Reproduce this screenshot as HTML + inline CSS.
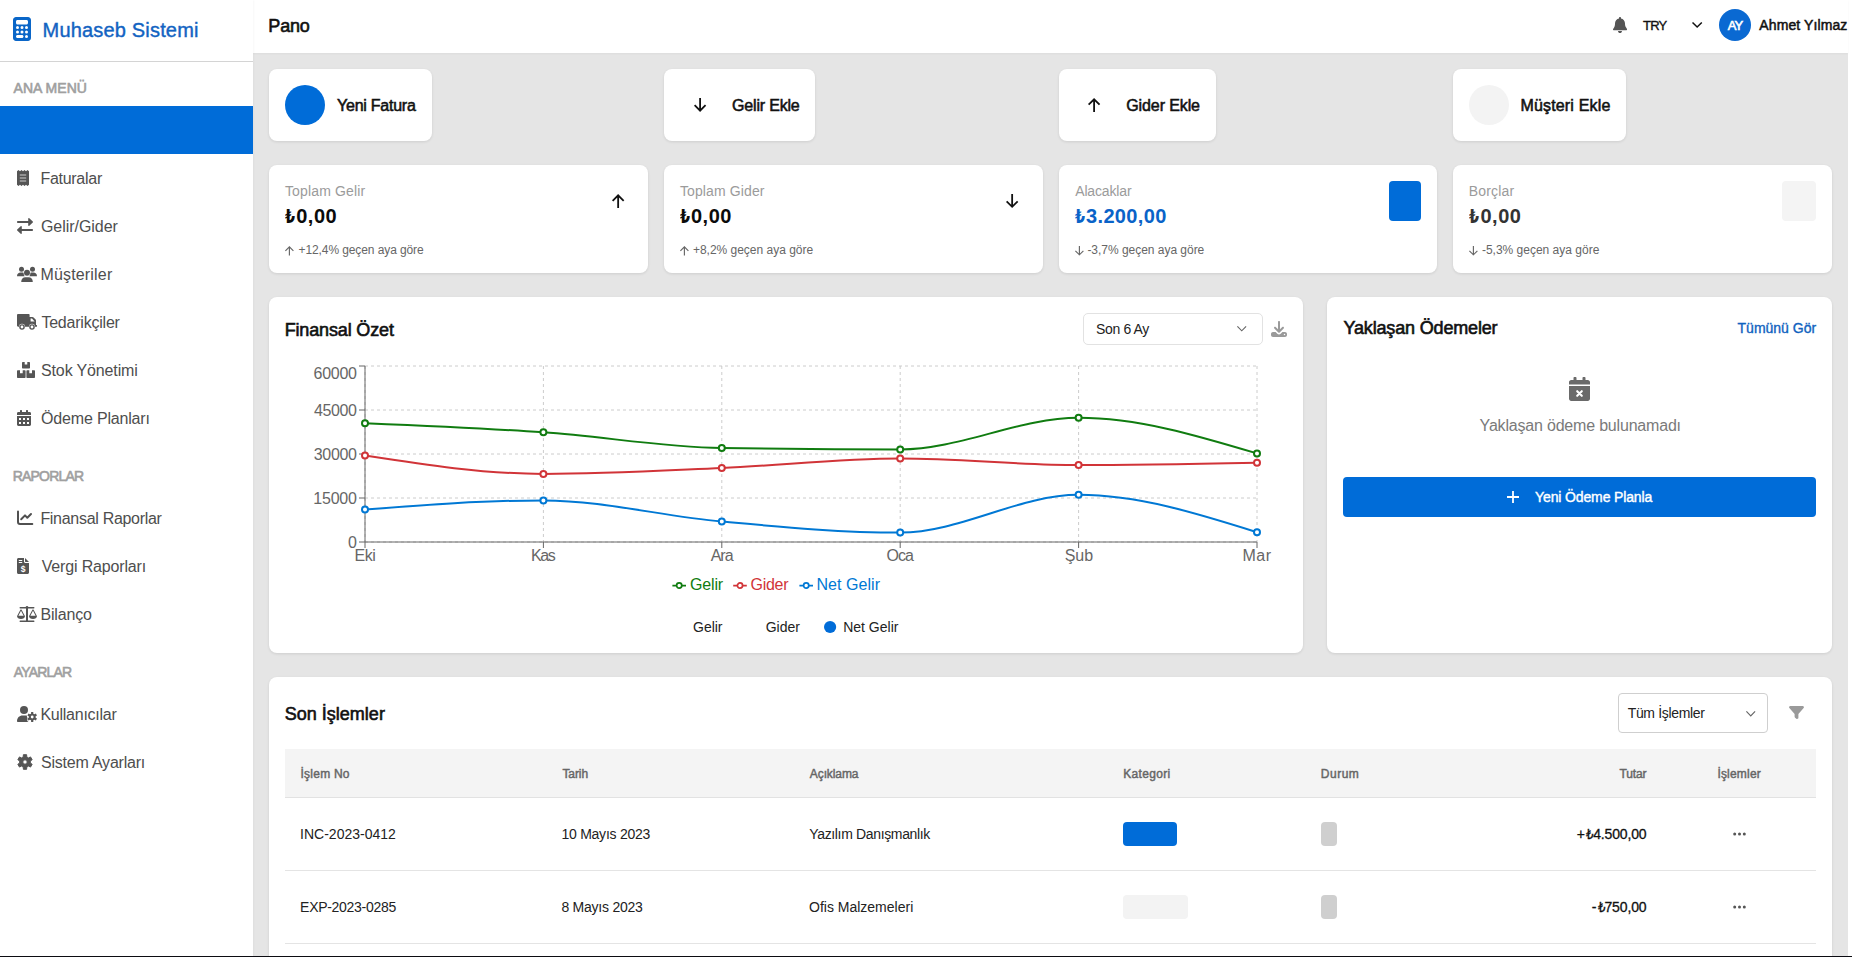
<!DOCTYPE html>
<html lang="tr">
<head>
<meta charset="utf-8">
<title>Muhaseb Sistemi - Pano</title>
<style>
*{box-sizing:border-box;margin:0;padding:0}
html,body{width:1852px;height:957px;overflow:hidden;background:#fff}
body{font-family:"Liberation Sans","DejaVu Sans",sans-serif;color:#111;position:relative;font-size:14px}
.abs{position:absolute}
.t{position:absolute;white-space:nowrap;display:block}
svg{display:block;overflow:visible}
a{text-decoration:none;color:inherit}
h1,h2,h3,p,strong{font-weight:normal}
#main{position:absolute;left:253px;top:0;width:1595px;height:956px;background:#e5e5e5;overflow:hidden}
#bottomline{position:absolute;left:0;top:956px;width:1852px;height:1px;background:#0c0c12;z-index:50}
#sidebar{position:absolute;left:0;top:0;width:253px;height:956px;background:#fff;z-index:5;box-shadow:1px 0 2px rgba(0,0,0,.03)}
#logo{position:absolute;left:0;top:0;width:253px;height:62px;border-bottom:1px solid #d4d4d4}
.nav{position:absolute;left:0;width:253px;height:48px;display:block}
.nav svg{position:absolute;left:17px;top:16px;fill:#555}
.nav.active{background:#006cd8}
#header{position:absolute;left:253px;top:0;width:1595px;height:53px;background:#fff;z-index:4;box-shadow:0 1px 2px rgba(0,0,0,.04)}
.card{position:absolute;background:#fff;border-radius:8px;box-shadow:0 1px 3px rgba(0,0,0,.10)}
.circ{position:absolute;width:40px;height:40px;border-radius:50%}
.sel{position:absolute;border:1px solid #ddd;border-radius:4px;background:#fff}
.badge{position:absolute;border-radius:4px}
.row{position:absolute;left:16px;width:1531px}
</style>
</head>
<body>
<aside id="sidebar">
<div id="logo">
<svg class="abs" style="left:13px;top:17px" width="18" height="24" viewBox="0 0 384 512"><path fill="#0a66c8" fill-rule="evenodd" d="M64 0h256c35 0 64 29 64 64v384c0 35-29 64-64 64H64c-35 0-64-29-64-64V64C0 29 29 0 64 0zM96 64c-18 0-32 14-32 32v32c0 18 14 32 32 32h192c18 0 32-14 32-32V96c0-18-14-32-32-32zM96 192a32 32 0 1 0 0 64a32 32 0 1 0 0-64zM192 192a32 32 0 1 0 0 64a32 32 0 1 0 0-64zM288 192a32 32 0 1 0 0 64a32 32 0 1 0 0-64zM96 288a32 32 0 1 0 0 64a32 32 0 1 0 0-64zM192 288a32 32 0 1 0 0 64a32 32 0 1 0 0-64zM288 288a32 32 0 1 0 0 64a32 32 0 1 0 0-64zM288 384a32 32 0 1 0 0 64a32 32 0 1 0 0-64zM96 384c-18 0-32 14-32 32s14 32 32 32h96c18 0 32-14 32-32s-14-32-32-32z"/></svg>
<h1 class="t" style="left:42.60px;top:20px;font-size:20px;line-height:20px;color:#1263c2;letter-spacing:0.175px;-webkit-text-stroke:0.4px #1263c2;">Muhaseb Sistemi</h1>
</div>
<h3 class="t" style="left:13.50px;top:81px;font-size:14px;line-height:14px;color:#a0a0a0;letter-spacing:0.045px;-webkit-text-stroke:0.6px #a0a0a0;">ANA MENÜ</h3>
<h3 class="t" style="left:12.70px;top:469px;font-size:14px;line-height:14px;color:#a0a0a0;letter-spacing:-0.787px;-webkit-text-stroke:0.6px #a0a0a0;">RAPORLAR</h3>
<h3 class="t" style="left:13.80px;top:665px;font-size:14px;line-height:14px;color:#a0a0a0;letter-spacing:-0.828px;-webkit-text-stroke:0.6px #a0a0a0;">AYARLAR</h3>
<a class="nav active" style="top:106px"><span class="t" style="left:40.40px;top:17px;font-size:16px;line-height:16px;color:#006cd8;">Pano</span></a>
<a class="nav" style="top:154px"><svg width="12" height="16" viewBox="0 0 12 16"><path d="M0 1.300 L1.500 0 L3 1.300 L4.500 0 L6 1.300 L7.500 0 L9 1.300 L10.500 0 L12 1.300 V14.700 L10.500 16 L9 14.700 L7.500 16 L6 14.700 L4.500 16 L3 14.700 L1.500 16 L0 14.700Z"/><path d="M2.800 4.300h6.400v1.400H2.800zM2.800 7.300h6.400v1.400H2.800zM2.800 10.300h6.400v1.400H2.800z" fill="#a6a6a6"/></svg><span class="t" style="left:40.40px;top:17px;font-size:16px;line-height:16px;color:#4e4e4e;letter-spacing:-0.274px;">Faturalar</span></a>
<a class="nav" style="top:202px"><svg width="16" height="16" viewBox="0 0 16 16"><path d="M.8 3h10.400V.7c0-.6.600-.9 1.100-.5L15.800 3.500c.3.300.3.700 0 1L12.300 7.800c-.5.400-1.100.100-1.100-.5V5H.8C.3 5 0 4.700 0 4.200v-.400C0 3.300.3 3 .8 3zM15.200 11H4.800V8.700c0-.6-.6-.9-1.100-.5L.2 11.500c-.3.300-.3.700 0 1l3.500 3.300c.5.400 1.100.100 1.100-.5V13h10.400c.5 0 .8-.3.8-.8v-.4c0-.5-.3-.8-.8-.8z"/></svg><span class="t" style="left:40.90px;top:17px;font-size:16px;line-height:16px;color:#4e4e4e;letter-spacing:-0.032px;">Gelir/Gider</span></a>
<a class="nav" style="top:250px"><svg width="20" height="16" viewBox="0 0 20 16"><circle cx="4.5" cy="3.2" r="2.5"/><circle cx="15.5" cy="3.2" r="2.5"/><circle cx="10" cy="6.8" r="3"/><path d="M0 10.2 C0 8 1.6 6.6 3.6 6.6 H5.4 C6 6.6 6.4 6.7 6.6 6.9 C6.6 8.2 7 9.3 7.7 10.2Z"/><path d="M20 10.2 C20 8 18.4 6.6 16.4 6.6 H14.6 C14 6.6 13.6 6.7 13.4 6.9 C13.4 8.2 13 9.3 12.3 10.2Z"/><path d="M4.2 16 C4.2 13 6 11.2 8.3 11.2 H11.7 C14 11.2 15.8 13 15.8 16Z"/></svg><span class="t" style="left:40.40px;top:17px;font-size:16px;line-height:16px;color:#4e4e4e;letter-spacing:0.177px;">Müşteriler</span></a>
<a class="nav" style="top:298px"><svg width="20" height="16" viewBox="0 0 20 16"><path d="M1.2 0 H11.6 C12.2 0 12.6 .4 12.6 1 V3 H15.4 C15.9 3 16.3 3.2 16.6 3.5 L18.6 5.6 C18.9 5.9 19 6.3 19 6.7 V11 H19.6 C19.9 11 20 11.2 20 11.5 V12.2 C20 12.6 19.8 12.8 19.5 12.8 H18 A3 3 0 0 0 12 12.8 H8 A3 3 0 0 0 2 12.8 H1.2 C.5 12.8 0 12.3 0 11.6 V1.2 C0 .5 .5 0 1.2 0Z M13.6 4.5 V7.4 H17.6 L15 4.5Z" fill-rule="evenodd"/><path d="M5 10.2a2.8 2.8 0 1 0 0 5.6a2.8 2.8 0 1 0 0-5.6zm0 1.4a1.4 1.4 0 1 1 0 2.8a1.4 1.4 0 1 1 0-2.8zM15 10.2a2.8 2.8 0 1 0 0 5.6a2.8 2.8 0 1 0 0-5.6zm0 1.4a1.4 1.4 0 1 1 0 2.8a1.4 1.4 0 1 1 0-2.8z" fill-rule="evenodd"/></svg><span class="t" style="left:41.40px;top:17px;font-size:16px;line-height:16px;color:#4e4e4e;letter-spacing:-0.217px;">Tedarikçiler</span></a>
<a class="nav" style="top:346px"><svg width="18" height="16" viewBox="0 0 18 16"><path d="M6 0H7.7V2.6H10.3V0H12c.6 0 1 .4 1 1V5.6c0 .6-.4 1-1 1H6c-.6 0-1-.4-1-1V1c0-.6.4-1 1-1z"/><path d="M1 8.2H3V11.2H5.7V8.2H7.6c.6 0 1 .4 1 1V15c0 .6-.4 1-1 1H1c-.6 0-1-.4-1-1V9.2c0-.6.4-1 1-1z"/><path d="M10.4 8.2H12.3V11.2H15V8.2H17c.6 0 1 .4 1 1V15c0 .6-.4 1-1 1H10.4c-.6 0-1-.4-1-1V9.2c0-.6.4-1 1-1z"/></svg><span class="t" style="left:41.00px;top:17px;font-size:16px;line-height:16px;color:#4e4e4e;letter-spacing:-0.130px;">Stok Yönetimi</span></a>
<a class="nav" style="top:394px"><svg width="14" height="16" viewBox="0 0 14 16"><path d="M3 .6c0-.4.3-.6.7-.6h.6c.4 0 .7.2.7.6V2h4V.6c0-.4.3-.6.7-.6h.6c.4 0 .7.2.7.6V2h1.6c.8 0 1.400.6 1.400 1.400V5H0V3.400C0 2.600.6 2 1.400 2H3z"/><path d="M0 6H14V14.600c0 .8-.6 1.400-1.400 1.400H1.400C.6 16 0 15.400 0 14.600z M2 8v2h2V8zM6 8v2h2V8zM10 8v2h2V8zM2 12v2h2v-2zM6 12v2h2v-2zM10 12v2h2v-2z" fill-rule="evenodd"/></svg><span class="t" style="left:41.00px;top:17px;font-size:16px;line-height:16px;color:#4e4e4e;letter-spacing:-0.171px;">Ödeme Planları</span></a>
<a class="nav" style="top:494px"><svg width="16" height="16" viewBox="0 0 16 16"><path d="M1 1.500V12C1 13.500 1.600 14 3 14H15.300" fill="none" stroke="#505050" stroke-width="2" stroke-linecap="round"/><path d="M4.200 9.200L8 5.400L10.300 7.700L14 4" fill="none" stroke="#505050" stroke-width="2" stroke-linecap="round" stroke-linejoin="round"/></svg><span class="t" style="left:40.40px;top:17px;font-size:16px;line-height:16px;color:#4e4e4e;letter-spacing:-0.297px;">Finansal Raporlar</span></a>
<a class="nav" style="top:542px"><svg width="12" height="16" viewBox="0 0 12 16"><path d="M1.500 0H7V3.500C7 4.300 7.700 5 8.500 5H12V14.500c0 .8-.7 1.500-1.500 1.500h-9C.7 16 0 15.300 0 14.500v-13C0 .7.700 0 1.500 0zM8 0L12 4H8.500C8.200 4 8 3.800 8 3.500z"/><path d="M1.800 2h3.400v1H1.800zM1.800 4h3.400v1H1.800z" fill="#fff"/><text x="6" y="14" font-family="Liberation Sans,sans-serif" font-weight="bold" font-size="8.500" text-anchor="middle" fill="#fff">$</text></svg><span class="t" style="left:41.70px;top:17px;font-size:16px;line-height:16px;color:#4e4e4e;letter-spacing:-0.162px;">Vergi Raporları</span></a>
<a class="nav" style="top:590px"><svg width="20" height="16" viewBox="0 0 20 16"><path d="M3.200 1H8.600C8.800.4 9.300 0 10 0s1.200.4 1.400 1H16.800c.4 0 .7.300.7.800s-.3.800-.7.800H11V14.400h5.800c.4 0 .7.300.7.800s-.3.800-.7.800H3.200c-.4 0-.7-.3-.7-.8s.3-.8.700-.8H9V2.600H3.200c-.4 0-.7-.3-.7-.8S2.800 1 3.200 1z"/><path d="M4 4.800L6.600 9.800H1.400zM4 3.400c.3 0 .5.100.6.400L7.900 10H8c0 1.800-1.800 3-4 3s-4-1.200-4-3h.1L3.400 3.800c.1-.3.300-.4.600-.4z" fill-rule="evenodd"/><path d="M16 4.800L18.600 9.800H13.400zM16 3.400c.3 0 .5.100.6.400L19.900 10H20c0 1.800-1.800 3-4 3s-4-1.200-4-3h.1L15.400 3.800c.1-.3.300-.4.600-.4z" fill-rule="evenodd"/></svg><span class="t" style="left:40.40px;top:17px;font-size:16px;line-height:16px;color:#4e4e4e;letter-spacing:-0.146px;">Bilanço</span></a>
<a class="nav" style="top:690px"><svg width="20" height="16" viewBox="0 0 20 16"><circle cx="7" cy="4" r="4"/><path d="M0 15.300C0 12 2.300 9.600 5.500 9.600H8.500c.6 0 1.100.1 1.600.2c-.4.700-.1 1.400.3 1.800c-.3.600-.3 1.300.1 1.800c-.4.700-.3 1.500.3 2c.2.200.5.400.8.600H.700c-.4 0-.7-.3-.7-.700z"/><path d="M14.08 7.68 L14.11 6.12 L16.29 6.12 L16.32 7.68 L17.51 8.37 L18.88 7.62 L19.97 9.50 L18.63 10.31 L18.63 11.69 L19.97 12.50 L18.88 14.38 L17.51 13.63 L16.32 14.32 L16.29 15.88 L14.11 15.88 L14.08 14.32 L12.89 13.63 L11.52 14.38 L10.43 12.50 L11.77 11.69 L11.77 10.31 L10.43 9.50 L11.52 7.62 L12.89 8.37Z M13.80 11.00 a1.40 1.40 0 1 0 2.80 0 a1.40 1.40 0 1 0 -2.80 0Z" fill-rule="evenodd"/></svg><span class="t" style="left:40.40px;top:17px;font-size:16px;line-height:16px;color:#4e4e4e;letter-spacing:-0.247px;">Kullanıcılar</span></a>
<a class="nav" style="top:738px"><svg width="16" height="16" viewBox="0 0 16 16"><path d="M6.28 2.88 L6.36 0.68 L9.64 0.68 L9.72 2.88 L11.57 3.95 L13.52 2.92 L15.16 5.76 L13.29 6.93 L13.29 9.07 L15.16 10.24 L13.52 13.08 L11.57 12.05 L9.72 13.12 L9.64 15.32 L6.36 15.32 L6.28 13.12 L4.43 12.05 L2.48 13.08 L0.84 10.24 L2.71 9.07 L2.71 6.93 L0.84 5.76 L2.48 2.92 L4.43 3.95Z M5.80 8.00 a2.20 2.20 0 1 0 4.40 0 a2.20 2.20 0 1 0 -4.40 0Z" fill-rule="evenodd" stroke="#555" stroke-width="1" stroke-linejoin="round"/></svg><span class="t" style="left:41.00px;top:17px;font-size:16px;line-height:16px;color:#4e4e4e;letter-spacing:-0.217px;">Sistem Ayarları</span></a>
</aside>
<header id="header">
<h2 class="t" style="left:15.30px;top:17px;font-size:18px;line-height:18px;color:#111;letter-spacing:-0.176px;-webkit-text-stroke:0.6px #111;">Pano</h2>
<svg class="abs" style="left:1360px;top:17px" width="14" height="16" viewBox="0 0 14 16"><path fill="#555" d="M7 0c.55 0 1 .45 1 1v.6c2.300.45 4 2.500 4 4.900v.6c0 1.450.5 2.900 1.400 4l.45.550c.25.300.3.700.13 1.050S13.400 13.300 13 13.300H1c-.4 0-.75-.22-.92-.57s-.12-.75.130-1.050l.45-.55C1.500 10 2 8.550 2 7.100v-.6c0-2.400 1.700-4.450 4-4.900V1c0-.55.450-1 1-1zM8.420 15.420C8.040 15.790 7.530 16 7 16s-1.040-.21-1.420-.58S5 14.530 5 14h4c0 .530-.21 1.040-.58 1.420z"/></svg>
<span class="t" style="left:1390.07px;top:19px;font-size:13px;line-height:13px;color:#111;letter-spacing:-0.822px;-webkit-text-stroke:0.35px #111;">TRY</span>
<svg class="abs" style="left:1437.00px;top:20.40px" width="14.30" height="9.60"><path d="M2.52 2.52 L7.15 7.07 L11.78 2.52" fill="none" stroke="#111" stroke-width="1.5"/></svg>
<div class="abs" style="left:1466px;top:9px;width:32px;height:32px;border-radius:50%;background:#0a69d2"></div>
<span class="t" style="left:1474.70px;top:19px;font-size:13px;line-height:13px;color:#fff;letter-spacing:-0.806px;-webkit-text-stroke:0.6px #fff;">AY</span>
<span class="t" style="left:1506.35px;top:18px;font-size:14px;line-height:14px;color:#111;letter-spacing:0.097px;-webkit-text-stroke:0.5px #111;">Ahmet Yılmaz</span>
</header>
<main id="main">
<a class="card" style="left:16px;top:69px;width:163px;height:72px"><span class="circ" style="left:16px;top:16px;background:#006cd8"></span><span class="t" style="left:68.07px;top:29px;font-size:16px;line-height:16px;color:#111;letter-spacing:-0.249px;-webkit-text-stroke:0.55px #111;">Yeni Fatura</span></a>
<a class="card" style="left:411px;top:69px;width:151px;height:72px"><svg class="abs" style="left:27.70px;top:27.30px" width="16.20" height="17.90" viewBox="0 0 16.20 17.90"><path d="M8.10 2.00 V15.18 M2.63 9.17 L8.10 14.64 L13.57 9.17" fill="none" stroke="#111" stroke-width="1.8" stroke-linejoin="miter"/></svg><span class="t" style="left:68.08px;top:29px;font-size:16px;line-height:16px;color:#111;letter-spacing:-0.189px;-webkit-text-stroke:0.55px #111;">Gelir Ekle</span></a>
<a class="card" style="left:806px;top:69px;width:157px;height:72px"><svg class="abs" style="left:26.90px;top:27.00px" width="16.20" height="17.90" viewBox="0 0 16.20 17.90"><path d="M8.10 15.90 V2.72 M2.63 8.73 L8.10 3.26 L13.57 8.73" fill="none" stroke="#111" stroke-width="1.8" stroke-linejoin="miter"/></svg><span class="t" style="left:67.28px;top:29px;font-size:16px;line-height:16px;color:#111;letter-spacing:-0.105px;-webkit-text-stroke:0.55px #111;">Gider Ekle</span></a>
<a class="card" style="left:1200px;top:69px;width:173px;height:72px"><span class="circ" style="left:16px;top:16px;background:#f3f3f3"></span><span class="t" style="left:67.38px;top:29px;font-size:16px;line-height:16px;color:#111;letter-spacing:0.175px;-webkit-text-stroke:0.55px #111;">Müşteri Ekle</span></a>
<section class="card" style="left:16px;top:165px;width:379px;height:108px"><span class="t" style="left:15.90px;top:19px;font-size:14px;line-height:14px;color:#9b9b9b;letter-spacing:0.162px;">Toplam Gelir</span><strong><span class="t" style="left:16.40px;top:42px;font-size:19px;line-height:19px;font-weight:bold;color:#0b0b0b;transform:scaleX(.76);transform-origin:0 50%;">₺</span><span class="t" style="left:27.20px;top:41px;font-size:20px;line-height:20px;font-weight:bold;color:#0b0b0b;letter-spacing:0.532px;">0,00</span></strong><svg class="abs" style="left:14.00px;top:78.50px" width="12.80" height="13.60" viewBox="0 0 12.80 13.60"><path d="M6.40 11.60 V2.46 M2.40 6.80 L6.40 2.80 L10.40 6.80" fill="none" stroke="#666" stroke-width="1.15" stroke-linejoin="miter"/></svg><span class="t" style="left:29.50px;top:79px;font-size:12px;line-height:12px;color:#666;letter-spacing:-0.096px;">+12,4% geçen aya göre</span><svg class="abs" style="left:340.85px;top:26.90px" width="16.30" height="18.10" viewBox="0 0 16.30 18.10"><path d="M8.15 16.10 V2.72 M2.63 8.78 L8.15 3.26 L13.67 8.78" fill="none" stroke="#111" stroke-width="1.8" stroke-linejoin="miter"/></svg></section>
<section class="card" style="left:411px;top:165px;width:379px;height:108px"><span class="t" style="left:15.90px;top:19px;font-size:14px;line-height:14px;color:#9b9b9b;letter-spacing:0.119px;">Toplam Gider</span><strong><span class="t" style="left:16.40px;top:42px;font-size:19px;line-height:19px;font-weight:bold;color:#0b0b0b;transform:scaleX(.76);transform-origin:0 50%;">₺</span><span class="t" style="left:26.90px;top:41px;font-size:20px;line-height:20px;font-weight:bold;color:#0b0b0b;letter-spacing:0.532px;">0,00</span></strong><svg class="abs" style="left:14.00px;top:78.50px" width="12.80" height="13.60" viewBox="0 0 12.80 13.60"><path d="M6.40 11.60 V2.46 M2.40 6.80 L6.40 2.80 L10.40 6.80" fill="none" stroke="#666" stroke-width="1.15" stroke-linejoin="miter"/></svg><span class="t" style="left:28.90px;top:79px;font-size:12px;line-height:12px;color:#666;letter-spacing:-0.008px;">+8,2% geçen aya göre</span><svg class="abs" style="left:340.35px;top:26.90px" width="16.30" height="18.10" viewBox="0 0 16.30 18.10"><path d="M8.15 2.00 V15.38 M2.63 9.32 L8.15 14.84 L13.67 9.32" fill="none" stroke="#111" stroke-width="1.8" stroke-linejoin="miter"/></svg></section>
<section class="card" style="left:806px;top:165px;width:378px;height:108px"><span class="t" style="left:16.20px;top:19px;font-size:14px;line-height:14px;color:#9b9b9b;letter-spacing:-0.140px;">Alacaklar</span><strong><span class="t" style="left:16.40px;top:42px;font-size:19px;line-height:19px;font-weight:bold;color:#0a63c8;transform:scaleX(.76);transform-origin:0 50%;">₺</span><span class="t" style="left:27.00px;top:41px;font-size:20px;line-height:20px;font-weight:bold;color:#0a63c8;letter-spacing:0.353px;">3.200,00</span></strong><svg class="abs" style="left:14.00px;top:78.50px" width="12.80" height="13.60" viewBox="0 0 12.80 13.60"><path d="M6.40 2.00 V11.14 M2.40 6.80 L6.40 10.79 L10.40 6.80" fill="none" stroke="#666" stroke-width="1.15" stroke-linejoin="miter"/></svg><span class="t" style="left:28.40px;top:79px;font-size:12px;line-height:12px;color:#666;letter-spacing:-0.028px;">-3,7% geçen aya göre</span><span class="abs" style="left:330px;top:16px;width:32px;height:40px;border-radius:4px;background:#006cd8"></span></section>
<section class="card" style="left:1200px;top:165px;width:379px;height:108px"><span class="t" style="left:15.80px;top:19px;font-size:14px;line-height:14px;color:#9b9b9b;letter-spacing:0.170px;">Borçlar</span><strong><span class="t" style="left:16.40px;top:42px;font-size:19px;line-height:19px;font-weight:bold;color:#333;transform:scaleX(.76);transform-origin:0 50%;">₺</span><span class="t" style="left:27.40px;top:41px;font-size:20px;line-height:20px;font-weight:bold;color:#333;letter-spacing:0.532px;">0,00</span></strong><svg class="abs" style="left:14.00px;top:78.50px" width="12.80" height="13.60" viewBox="0 0 12.80 13.60"><path d="M6.40 2.00 V11.14 M2.40 6.80 L6.40 10.79 L10.40 6.80" fill="none" stroke="#666" stroke-width="1.15" stroke-linejoin="miter"/></svg><span class="t" style="left:28.90px;top:79px;font-size:12px;line-height:12px;color:#666;">-5,3% geçen aya göre</span><span class="abs" style="left:329px;top:16px;width:34px;height:40px;border-radius:4px;background:#f4f4f4"></span></section>
<section class="card" style="left:16px;top:297px;width:1034px;height:356px">
<h2 class="t" style="left:15.70px;top:24px;font-size:18px;line-height:18px;color:#111;letter-spacing:-0.154px;-webkit-text-stroke:0.6px #111;">Finansal Özet</h2>
<div class="sel" style="left:814px;top:16px;width:180px;height:32px;border-color:#e2e2e2;border-radius:5px"><span class="t" style="left:12.10px;top:8px;font-size:14px;line-height:14px;color:#222;letter-spacing:-0.366px;">Son 6 Ay</span><svg class="abs" style="left:151.40px;top:10.40px" width="13.50" height="9.20"><path d="M2.40 2.40 L6.75 6.80 L11.10 2.40" fill="none" stroke="#666" stroke-width="1.15"/></svg></div>
<svg class="abs" style="left:1002px;top:24px" width="16" height="16" viewBox="0 0 16 16"><path fill="#9a9a9a" d="M7 .8c0-.45.45-.8 1-.8s1 .35 1 .8V8.300l2.300-2.300c.4-.4 1-.4 1.400 0s.4 1 0 1.400L8.700 11.400c-.4.4-1 .4-1.400 0L3.300 7.400c-.4-.4-.4-1 0-1.400s1-.4 1.400 0L7 8.300z"/><path fill="#9a9a9a" fill-rule="evenodd" d="M2 11h2.600l1.700 1.700c.95.95 2.450.95 3.400 0L11.400 11H14c1.100 0 2 .9 2 2v1c0 1.100-.9 2-2 2H2c-1.100 0-2-.9-2-2v-1c0-1.100.9-2 2-2zM13.500 12.750a.75.750 0 1 0 0 1.500a.75.750 0 1 0 0-1.500z"/></svg>
<svg class="abs" style="left:0;top:0" width="1034" height="356" viewBox="269 297 1034 356">
<g stroke="#ccc" stroke-dasharray="3 3" fill="none"><path d="M365 366H1257"/><path d="M365 410H1257"/><path d="M365 454H1257"/><path d="M365 498H1257"/><path d="M365 542H1257"/><path d="M365 366V542"/><path d="M543.4 366V542"/><path d="M721.8 366V542"/><path d="M900.2 366V542"/><path d="M1078.6 366V542"/><path d="M1257 366V542"/></g>
<g stroke="#666" fill="none"><path d="M365 366V542"/><path d="M365 542H1257"/><path d="M359 366H365"/><path d="M359 410H365"/><path d="M359 454H365"/><path d="M359 498H365"/><path d="M359 542H365"/><path d="M365 542V548"/><path d="M543.4 542V548"/><path d="M721.8 542V548"/><path d="M900.2 542V548"/><path d="M1078.6 542V548"/><path d="M1257 542V548"/></g>
<path d="M365.00,423.20C424.47,425.68,483.93,428.17,543.40,432.30C602.87,436.43,662.33,447.07,721.80,448.00C781.27,448.93,840.73,449.40,900.20,449.40C959.67,449.40,1019.13,417.80,1078.60,417.80C1138.07,417.80,1197.53,435.60,1257.00,453.40" fill="none" stroke="#107c10" stroke-width="2"/><circle cx="365.0" cy="423.2" r="3" fill="#fff" stroke="#107c10" stroke-width="2"/><circle cx="543.4" cy="432.3" r="3" fill="#fff" stroke="#107c10" stroke-width="2"/><circle cx="721.8" cy="448.0" r="3" fill="#fff" stroke="#107c10" stroke-width="2"/><circle cx="900.2" cy="449.4" r="3" fill="#fff" stroke="#107c10" stroke-width="2"/><circle cx="1078.6" cy="417.8" r="3" fill="#fff" stroke="#107c10" stroke-width="2"/><circle cx="1257.0" cy="453.4" r="3" fill="#fff" stroke="#107c10" stroke-width="2"/>
<path d="M365.00,455.60C424.47,464.75,483.93,473.90,543.40,473.90C602.87,473.90,662.33,470.55,721.80,468.00C781.27,465.45,840.73,458.60,900.20,458.60C959.67,458.60,1019.13,465.10,1078.60,465.10C1138.07,465.10,1197.53,463.95,1257.00,462.80" fill="none" stroke="#d13438" stroke-width="2"/><circle cx="365.0" cy="455.6" r="3" fill="#fff" stroke="#d13438" stroke-width="2"/><circle cx="543.4" cy="473.9" r="3" fill="#fff" stroke="#d13438" stroke-width="2"/><circle cx="721.8" cy="468.0" r="3" fill="#fff" stroke="#d13438" stroke-width="2"/><circle cx="900.2" cy="458.6" r="3" fill="#fff" stroke="#d13438" stroke-width="2"/><circle cx="1078.6" cy="465.1" r="3" fill="#fff" stroke="#d13438" stroke-width="2"/><circle cx="1257.0" cy="462.8" r="3" fill="#fff" stroke="#d13438" stroke-width="2"/>
<path d="M365.00,509.60C424.47,505.00,483.93,500.40,543.40,500.40C602.87,500.40,662.33,516.23,721.80,521.60C781.27,526.97,840.73,532.60,900.20,532.60C959.67,532.60,1019.13,494.80,1078.60,494.80C1138.07,494.80,1197.53,513.50,1257.00,532.20" fill="none" stroke="#0078d4" stroke-width="2"/><circle cx="365.0" cy="509.6" r="3" fill="#fff" stroke="#0078d4" stroke-width="2"/><circle cx="543.4" cy="500.4" r="3" fill="#fff" stroke="#0078d4" stroke-width="2"/><circle cx="721.8" cy="521.6" r="3" fill="#fff" stroke="#0078d4" stroke-width="2"/><circle cx="900.2" cy="532.6" r="3" fill="#fff" stroke="#0078d4" stroke-width="2"/><circle cx="1078.6" cy="494.8" r="3" fill="#fff" stroke="#0078d4" stroke-width="2"/><circle cx="1257.0" cy="532.2" r="3" fill="#fff" stroke="#0078d4" stroke-width="2"/>
<path d="M672.4 585.6h4.200a2.600 2.600 0 1 1 5.200 0h4.200M681.8 585.6a2.600 2.600 0 1 1 -5.200 0" fill="none" stroke="#107c10" stroke-width="1.750"/><path d="M733.2 585.6h4.200a2.600 2.600 0 1 1 5.200 0h4.200M742.6 585.6a2.600 2.600 0 1 1 -5.200 0" fill="none" stroke="#d13438" stroke-width="1.750"/><path d="M799.4 585.6h4.200a2.600 2.600 0 1 1 5.200 0h4.200M808.8 585.6a2.600 2.600 0 1 1 -5.200 0" fill="none" stroke="#0078d4" stroke-width="1.750"/><circle cx="830.1" cy="627" r="6.100" fill="#006cd8"/>
</svg>
<span class="t" style="left:44.60px;top:69px;font-size:16px;line-height:16px;color:#666;letter-spacing:-0.273px;">60000</span><span class="t" style="left:45.10px;top:106px;font-size:16px;line-height:16px;color:#666;letter-spacing:-0.398px;">45000</span><span class="t" style="left:44.80px;top:150px;font-size:16px;line-height:16px;color:#666;letter-spacing:-0.323px;">30000</span><span class="t" style="left:44.20px;top:194px;font-size:16px;line-height:16px;color:#666;letter-spacing:-0.173px;">15000</span><span class="t" style="left:79.10px;top:238px;font-size:16px;line-height:16px;color:#666;">0</span>
<span class="t" style="left:85.60px;top:251px;font-size:16px;line-height:16px;color:#666;letter-spacing:-0.536px;">Eki</span><span class="t" style="left:261.90px;top:251px;font-size:16px;line-height:16px;color:#666;letter-spacing:-1.385px;">Kas</span><span class="t" style="left:441.65px;top:251px;font-size:16px;line-height:16px;color:#666;letter-spacing:-1.000px;">Ara</span><span class="t" style="left:617.50px;top:251px;font-size:16px;line-height:16px;color:#666;letter-spacing:-1.023px;">Oca</span><span class="t" style="left:795.65px;top:251px;font-size:16px;line-height:16px;color:#666;letter-spacing:-0.035px;">Şub</span><span class="t" style="left:973.45px;top:251px;font-size:16px;line-height:16px;color:#666;letter-spacing:0.537px;">Mar</span>
<span class="t" style="left:421.00px;top:280px;font-size:16px;line-height:16px;color:#107c10;letter-spacing:-0.163px;">Gelir</span><span class="t" style="left:481.50px;top:280px;font-size:16px;line-height:16px;color:#d13438;letter-spacing:-0.274px;">Gider</span><span class="t" style="left:547.50px;top:280px;font-size:16px;line-height:16px;color:#0078d4;letter-spacing:0.050px;">Net Gelir</span>
<span class="t" style="left:424.10px;top:323px;font-size:14px;line-height:14px;color:#222;letter-spacing:-0.049px;">Gelir</span><span class="t" style="left:496.70px;top:323px;font-size:14px;line-height:14px;color:#222;letter-spacing:-0.018px;">Gider</span><span class="t" style="left:574.20px;top:323px;font-size:14px;line-height:14px;color:#222;">Net Gelir</span>
</section>
<section class="card" style="left:1074px;top:297px;width:505px;height:356px">
<h2 class="t" style="left:16.50px;top:22px;font-size:18px;line-height:18px;color:#111;letter-spacing:-0.166px;-webkit-text-stroke:0.6px #111;">Yaklaşan Ödemeler</h2>
<a class="t" style="left:410.58px;top:24px;font-size:14px;line-height:14px;color:#0f62c0;letter-spacing:-0.008px;-webkit-text-stroke:0.35px #0f62c0;">Tümünü Gör</a>
<svg class="abs" style="left:242px;top:80px" width="21" height="24" viewBox="0 0 21 24"><path fill="#6a6a6a" d="M4.500 1c0-.55.45-1 1-1h1c.55 0 1 .45 1 1v2h6V1c0-.55.45-1 1-1h1c.55 0 1 .45 1 1v2h2.250C19.990 3 21 4.010 21 5.250V7.500H0V5.250C0 4.010 1.010 3 2.250 3H4.500zM0 9h21v12.750c0 1.240-1.010 2.250-2.250 2.250H2.250C1.010 24 0 22.990 0 21.750z"/><path d="M8.200 14.200L12.800 18.800M12.800 14.200L8.200 18.800" stroke="#fff" stroke-width="2.100" stroke-linecap="round" fill="none"/></svg>
<p class="t" style="left:152.60px;top:121px;font-size:16px;line-height:16px;color:#7a7a7a;letter-spacing:-0.192px;">Yaklaşan ödeme bulunamadı</p>
<a class="abs" style="left:16px;top:180px;width:473px;height:40px;border-radius:4px;background:#006cd8"><svg class="abs" style="left:163.7px;top:13.8px" width="12" height="12"><path d="M6 0V12M0 6H12" stroke="#fff" stroke-width="1.800" fill="none"/></svg><span class="t" style="left:192.10px;top:13px;font-size:14px;line-height:14px;color:#fff;letter-spacing:-0.135px;-webkit-text-stroke:0.4px #fff;">Yeni Ödeme Planla</span></a>
</section>
<section class="card" style="left:16px;top:677px;width:1563px;height:320px">
<h2 class="t" style="left:15.70px;top:28px;font-size:18px;line-height:18px;color:#111;letter-spacing:0.014px;-webkit-text-stroke:0.6px #111;">Son İşlemler</h2>
<div class="sel" style="left:1349px;top:16px;width:150px;height:40px;border-color:#cfcfcf"><span class="t" style="left:8.70px;top:12px;font-size:14px;line-height:14px;color:#222;letter-spacing:-0.330px;">Tüm İşlemler</span><svg class="abs" style="left:125.30px;top:14.60px" width="13.50" height="9.30"><path d="M2.40 2.40 L6.75 6.90 L11.10 2.40" fill="none" stroke="#666" stroke-width="1.15"/></svg></div>
<svg class="abs" style="left:1519.8px;top:29.4px" width="15" height="13" viewBox="0 0 15 13"><path fill="#9a9a9a" d="M.15.750C.35.300.8 0 1.300 0H13.700c.5 0 .95.300 1.150.75s.130.950-.2 1.350L9.400 8.100v3.600c0 .5-.28.950-.72 1.170s-.97.170-1.360-.130l-1.200-.9C5.800 11.600 5.600 11.200 5.600 10.800V8.100L.35 2.100C.03 1.700-.04 1.200.150.750z"/></svg>
<div class="abs" role="row" style="left:16px;top:72px;width:1531px;height:49px;background:#f4f4f4;border-bottom:1px solid #e2e2e2"><span class="t" style="left:15.52px;top:19px;font-size:12px;line-height:12px;color:#666;letter-spacing:0.240px;-webkit-text-stroke:0.45px #666;">İşlem No</span><span class="t" style="left:277.42px;top:19px;font-size:12px;line-height:12px;color:#666;letter-spacing:-0.071px;-webkit-text-stroke:0.45px #666;">Tarih</span><span class="t" style="left:524.83px;top:19px;font-size:12px;line-height:12px;color:#666;letter-spacing:-0.103px;-webkit-text-stroke:0.45px #666;">Açıklama</span><span class="t" style="left:838.32px;top:19px;font-size:12px;line-height:12px;color:#666;letter-spacing:0.303px;-webkit-text-stroke:0.45px #666;">Kategori</span><span class="t" style="left:1035.82px;top:19px;font-size:12px;line-height:12px;color:#666;letter-spacing:0.510px;-webkit-text-stroke:0.45px #666;">Durum</span><span class="t" style="left:1334.42px;top:19px;font-size:12px;line-height:12px;color:#666;letter-spacing:-0.129px;-webkit-text-stroke:0.45px #666;">Tutar</span><span class="t" style="left:1432.42px;top:19px;font-size:12px;line-height:12px;color:#666;letter-spacing:0.191px;-webkit-text-stroke:0.45px #666;">İşlemler</span></div>
<div class="abs" role="row" style="left:16px;top:121px;width:1531px;height:73px;border-bottom:1px solid #e4e4e4"><span class="t" style="left:15.00px;top:29px;font-size:14px;line-height:14px;color:#222;letter-spacing:0.014px;">INC-2023-0412</span><span class="t" style="left:276.40px;top:29px;font-size:14px;line-height:14px;color:#222;letter-spacing:-0.237px;">10 Mayıs 2023</span><span class="t" style="left:524.30px;top:29px;font-size:14px;line-height:14px;color:#222;letter-spacing:-0.352px;">Yazılım Danışmanlık</span><span class="badge" style="left:838px;top:24px;width:54px;height:24px;background:#006cd8"></span><span class="badge" style="left:1036px;top:24px;width:16px;height:24px;background:#cfcfcf"></span><strong><span class="t" style="left:1291.75px;top:29px;font-size:14px;line-height:14px;color:#111;-webkit-text-stroke:0.3px #111;">+</span><span class="t" style="left:1300.75px;top:29px;font-size:14px;line-height:14px;color:#111;-webkit-text-stroke:0.3px #111;transform:scaleX(.84);transform-origin:0 50%;">₺</span><span class="t" style="left:1308.15px;top:29px;font-size:14px;line-height:14px;color:#111;letter-spacing:-0.144px;-webkit-text-stroke:0.3px #111;">4.500,00</span></strong><svg class="abs" style="left:1447.6px;top:33.5px" width="13" height="4"><circle cx="1.700" cy="2" r="1.500" fill="#555"/><circle cx="6.500" cy="2" r="1.500" fill="#555"/><circle cx="11.300" cy="2" r="1.500" fill="#555"/></svg></div>
<div class="abs" role="row" style="left:16px;top:194px;width:1531px;height:73px;border-bottom:1px solid #e4e4e4"><span class="t" style="left:15.10px;top:29px;font-size:14px;line-height:14px;color:#222;letter-spacing:-0.295px;">EXP-2023-0285</span><span class="t" style="left:276.40px;top:29px;font-size:14px;line-height:14px;color:#222;letter-spacing:-0.233px;">8 Mayıs 2023</span><span class="t" style="left:524.00px;top:29px;font-size:14px;line-height:14px;color:#222;">Ofis Malzemeleri</span><span class="badge" style="left:838px;top:24px;width:65px;height:24px;background:#f3f3f3"></span><span class="badge" style="left:1036px;top:24px;width:16px;height:24px;background:#cfcfcf"></span><strong><span class="t" style="left:1306.85px;top:29px;font-size:14px;line-height:14px;color:#111;-webkit-text-stroke:0.3px #111;">-</span><span class="t" style="left:1312.75px;top:29px;font-size:14px;line-height:14px;color:#111;-webkit-text-stroke:0.3px #111;transform:scaleX(.84);transform-origin:0 50%;">₺</span><span class="t" style="left:1319.45px;top:29px;font-size:14px;line-height:14px;color:#111;letter-spacing:-0.127px;-webkit-text-stroke:0.3px #111;">750,00</span></strong><svg class="abs" style="left:1447.6px;top:33.5px" width="13" height="4"><circle cx="1.700" cy="2" r="1.500" fill="#555"/><circle cx="6.500" cy="2" r="1.500" fill="#555"/><circle cx="11.300" cy="2" r="1.500" fill="#555"/></svg></div>
</section>
</main>
<div id="bottomline"></div>
</body>
</html>
